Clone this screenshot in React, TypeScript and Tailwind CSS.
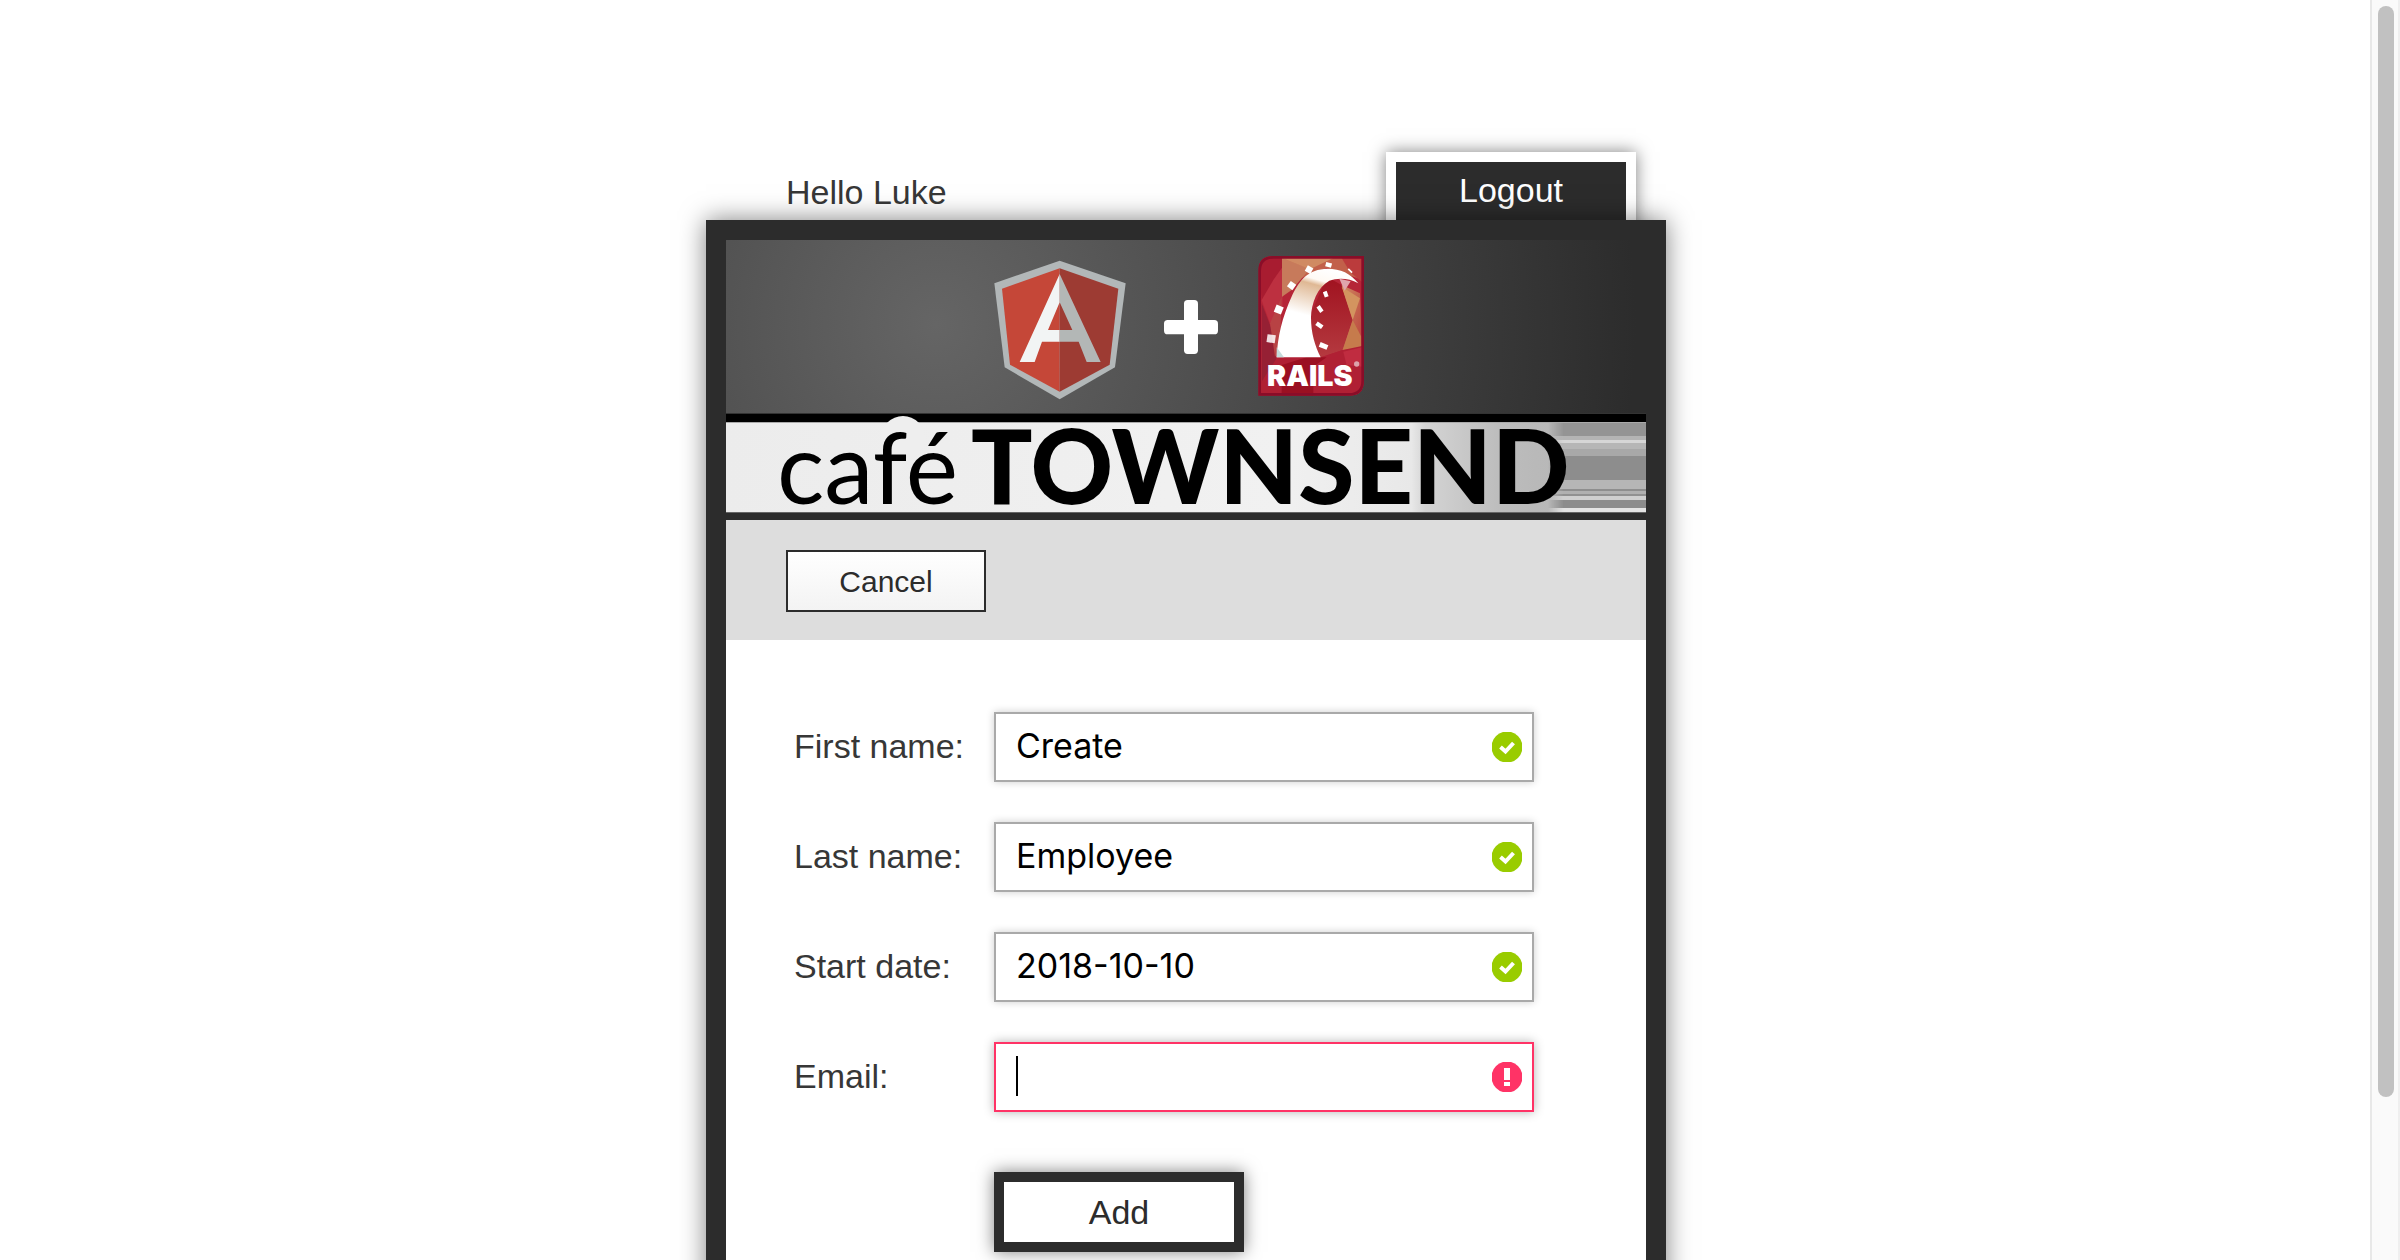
import React, { useState } from 'react';

function CafeLogo() {
  return (
    <svg
      viewBox="0 0 920 280"
      className="block w-full overflow-visible"
      role="img"
      aria-label="Angular plus Rails, café Townsend"
    >
      <defs>
        <linearGradient id="banner" x1="0" x2="1" y1="0" y2="0">
          <stop offset="0" stopColor="#ececec" />
          <stop offset="0.6" stopColor="#f1f1f1" />
          <stop offset="0.745" stopColor="#e8e8e8" />
          <stop offset="0.76" stopColor="#d4d4d4" />
          <stop offset="0.84" stopColor="#bdbdbd" />
          <stop offset="0.88" stopColor="#b9b9b9" />
          <stop offset="1" stopColor="#b4b4b4" />
        </linearGradient>
        <linearGradient id="fade" x1="0" x2="1" y1="0" y2="0">
          <stop offset="0" stopColor="#fff" stopOpacity="0" />
          <stop offset="0.16" stopColor="#fff" stopOpacity="1" />
        </linearGradient>
        <mask id="streaks">
          <rect x="822" y="180" width="98" height="94" fill="url(#fade)" />
        </mask>
        <linearGradient id="track" x1="0.6" y1="0" x2="0.35" y2="1">
          <stop offset="0" stopColor="#ffffff" />
          <stop offset="0.14" stopColor="#fffaf4" />
          <stop offset="0.2" stopColor="#dfb894" />
          <stop offset="0.55" stopColor="#ffffff" />
          <stop offset="1" stopColor="#ffffff" />
        </linearGradient>
        <linearGradient id="cave" x1="0" y1="0" x2="0" y2="1">
          <stop offset="0" stopColor="#a0121f" />
          <stop offset="1" stopColor="#b53a40" />
        </linearGradient>
        <linearGradient id="amber" x1="0" y1="0" x2="1" y2="1">
          <stop offset="0" stopColor="#d08a62" />
          <stop offset="1" stopColor="#b9413b" />
        </linearGradient>
        <clipPath id="card">
          <path d="M880 48H1152V422Q1152 467 1107 467H835V93Q835 48 880 48Z" />
        </clipPath>
      </defs>

      <g transform="translate(254 0) scale(0.33333)">
        {/* Angular shield */}
        <path d="M239 62L437 130L405 382L239 478L74 382L43 130Z" fill="#b2b7b8" />
        <path d="M239 85L66 146L90 374L239 455Z" fill="#c54738" />
        <path d="M239 85L415 146L389 374L239 455Z" fill="#9d3b33" />
        <path d="M239 102L119 366H164L186 305H239V270H204L239 187Z" fill="#f2f4f4" />
        <path d="M239 102L362 366H320L296 305H239V270H277L239 187Z" fill="#b3b7b6" />

        {/* Plus */}
        <rect x="552" y="240" width="162" height="43" rx="11" fill="#fff" />
        <rect x="612" y="180" width="42" height="162" rx="11" fill="#fff" />

        {/* Rails card */}
        <g clipPath="url(#card)">
          <rect x="835" y="48" width="317" height="419" fill="#b52537" />
          <path d="M835 48H908V160L845 180Z" fill="#a81c30" />
          <path d="M845 180L880 120L908 80V200L870 250Z" fill="#bd3040" />
          <path d="M845 190L880 280L890 360L845 440Z" fill="#962034" />
          <path d="M870 250L905 170L900 330L885 350Z" fill="#b84244" />
          <path d="M906 54H1150V120L1040 84L950 120L906 170Z" fill="#c2604a" />
          <path d="M906 54L990 86L935 150L906 170Z" fill="#c77a5b" />
          <path d="M906 54H1060L990 88Z" fill="#d08a62" />
          <path d="M1085 54H1150V130L1110 96Z" fill="#bb3b3c" />
          <path d="M1040 110L1085 135L1118 240L1088 330L1015 355L985 240Z" fill="url(#cave)" />
          <path d="M1085 135L1140 160L1146 320L1088 330L1118 240Z" fill="url(#amber)" />
          <path d="M1085 140L1140 175L1118 240Z" fill="#d3945f" />
          <path d="M1118 240L1144 290V325L1088 330Z" fill="#c67b4c" />
          <path d="M940 352H1022L1088 330L1146 318V467H835V440L890 355Z" fill="#b02034" />
          <path d="M905 375L980 352L1040 352L1000 380V467H905Z" fill="#9b1022" />
          <path d="M1090 335L1146 322V380L1100 375Z" fill="#c02c40" />
          <path d="M890 352C893 290 905 235 937 165C960 118 985 88 1042 86C1082 86 1112 100 1135 130C1105 112 1070 114 1048 122C1012 142 994 190 993 232C993 280 1005 318 1022 352Z" fill="url(#track)" />
          <path d="M1078 116L1112 124L1094 152Z" fill="#e0a5ac" />
          <path d="M890 322L912 352H890Z" fill="#c5dcdc" />
          <g fill="#fff">
            <rect x="978" y="79" width="19" height="19" transform="rotate(30 987 88)" />
            <rect x="1037" y="68" width="18" height="13" transform="rotate(15 1045 74)" />
            <rect x="925" y="126" width="20" height="20" transform="rotate(35 934 136)" />
            <rect x="885" y="197" width="23" height="23" transform="rotate(22 896 208)" />
            <rect x="861" y="284" width="25" height="24" transform="rotate(8 872 296)" opacity="0.85" />
            <rect x="1102" y="88" width="16" height="5" transform="rotate(45 1108 92)" />
            <rect x="1031" y="154" width="12" height="17" transform="rotate(-20 1037 162)" />
            <rect x="1014" y="197" width="12" height="20" transform="rotate(-35 1020 207)" />
            <rect x="1008" y="249" width="21" height="13" transform="rotate(35 1018 255)" />
            <rect x="1018" y="310" width="25" height="15" transform="rotate(22 1030 318)" />
          </g>
          <text
            x="861"
            y="437"
            fontSize="86"
            fontWeight="900"
            fill="#fff"
            fontFamily="Inter, 'Liberation Sans', sans-serif"
          >
            RAILS
          </text>
          <circle cx="1130" cy="372" r="8" fill="#dca3ab" />
        </g>
        <path d="M880 52H1148V422Q1148 463 1107 463H839V93Q839 52 880 52Z" fill="none" stroke="#8a0d28" strokeWidth="8" />
      </g>

      {/* Café Townsend banner */}
      <rect x="0" y="173" width="920" height="1" fill="#333" />
      <rect x="0" y="174" width="920" height="8" fill="#000" />
      <rect x="0" y="182" width="920" height="90" fill="url(#banner)" />
      <rect x="0" y="182" width="920" height="1" fill="#aaa" />
      <g mask="url(#streaks)">
        <rect x="812" y="183" width="108" height="13" fill="#949494" />
        <rect x="812" y="196" width="108" height="4" fill="#b4b4b4" />
        <rect x="812" y="200" width="108" height="3" fill="#d6d6d6" />
        <rect x="812" y="203" width="108" height="6" fill="#b6b6b6" />
        <rect x="812" y="209" width="108" height="7" fill="#a8a8a8" />
        <rect x="812" y="216" width="108" height="24" fill="#8d8d8d" />
        <rect x="812" y="240" width="108" height="9" fill="#b6b6b6" />
        <rect x="812" y="249" width="108" height="2" fill="#8e8e8e" />
        <rect x="812" y="251" width="108" height="3" fill="#b0b0b0" />
        <rect x="812" y="254" width="108" height="2" fill="#919191" />
        <rect x="812" y="256" width="108" height="4" fill="#cfcfcf" />
        <rect x="812" y="260" width="108" height="8" fill="#8c8c8c" />
        <rect x="812" y="268" width="108" height="4" fill="#e4e4e4" />
      </g>
      <circle cx="177" cy="198" r="22" fill="#eee" />
      <rect x="0" y="272" width="920" height="1" fill="#666" />
      <rect x="0" y="273" width="920" height="7" fill="#2c2c2c" />
      <text x="51" y="264" fontSize="99" fill="#000" fontFamily="Lato, sans-serif">
        café
      </text>
      <text x="245" y="264" fontSize="102" fontWeight="900" fill="#000" fontFamily="Lato, sans-serif">
        TOWNSEND
      </text>
    </svg>
  );
}

function ValidIcon() {
  return (
    <svg viewBox="0 0 30 30" className="size-[30px]" aria-hidden="true">
      <circle cx="15" cy="15" r="15.5" fill="#99cc00" />
      <path d="M8.5 15L13.5 19.5L21.5 11" fill="none" stroke="#fff" strokeWidth="4" />
    </svg>
  );
}

function InvalidIcon() {
  return (
    <svg viewBox="0 0 30 30" className="size-[30px]" aria-hidden="true">
      <circle cx="15" cy="15" r="15.5" fill="#ff3366" />
      <rect x="12" y="6" width="6" height="12" fill="#fff" />
      <rect x="12" y="20" width="6" height="4" fill="#fff" />
    </svg>
  );
}

type FieldProps = { id: string; label: string; initial: string; active?: boolean };

function Field({ id, label, initial, active }: FieldProps) {
  const [value, setValue] = useState(initial);
  const valid = value !== '';
  return (
    <>
      <label htmlFor={id} className="pb-[2px]">
        {label}
      </label>
      <div className="relative">
        <input
          id={id}
          type="text"
          value={value}
          onChange={(e) => setValue(e.target.value)}
          className={
            'block h-[70px] w-full border-2 bg-white pr-14 pb-1 pl-5 font-[Inter,sans-serif] text-[34px] text-black outline-none ' +
            (valid
              ? 'border-[#a9a9a9] shadow-[0_0_8px_rgba(0,0,0,0.2)]'
              : 'border-[#ff3366] shadow-[0_0_10px_rgba(0,0,0,0.3)]')
          }
        />
        {active && !valid && <span className="absolute top-[14px] left-[22px] h-10 w-[2px] bg-black" />}
        <span className="absolute top-5 right-3">{valid ? <ValidIcon /> : <InvalidIcon />}</span>
      </div>
    </>
  );
}

export default function App() {
  return (
    <div className="flex h-screen overflow-hidden bg-white font-['Liberation_Sans',Arial,sans-serif] text-[34px] text-[#373737]">
      <div className="min-w-0 flex-1 pl-[2px]">
        <div className="mx-auto max-w-[960px]">
          <header className="flex items-end justify-between pt-[152px] pr-[30px] pl-[80px]">
            <p className="pb-[8px] leading-[40px]">Hello Luke</p>
            <button
              type="button"
              className="-mb-4 h-[84px] w-[250px] border-10 border-b-0 border-white bg-[#2c2c2c] pb-[18px] leading-[56px] text-white shadow-[0_0_16px_rgba(0,0,0,0.5)]"
            >
              Logout
            </button>
          </header>

          <main className="relative border-20 border-[#2c2c2c] bg-white shadow-[0_0_24px_rgba(0,0,0,0.5)]">
            <div className="bg-[radial-gradient(circle_at_210px_84px,#656565,#2c2c2c_700px)]">
              <CafeLogo />
            </div>

            <nav className="relative bg-[#dddddd] px-[60px] pt-[30px] pb-[28px]">
              <button
                type="button"
                className="block h-[62px] w-[200px] border-2 border-[#2c2c2c] bg-linear-to-b from-white to-[#f3f3f3] text-[30px] text-[#2c2c2c]"
              >
                Cancel
              </button>
            </nav>

            <form
              className="grid grid-cols-[200px_1fr] items-center gap-y-[40px] pt-[72px] pr-[112px] pb-[120px] pl-[68px]"
              onSubmit={(e) => e.preventDefault()}
            >
              <Field id="first-name" label="First name:" initial="Create" />
              <Field id="last-name" label="Last name:" initial="Employee" />
              <Field id="start-date" label="Start date:" initial="2018-10-10" />
              <Field id="email" label="Email:" initial="" active />
              <button
                type="submit"
                className="col-start-2 mt-5 h-20 w-[250px] border-10 border-[#2c2c2c] bg-white leading-[60px] text-[#2c2c2c] shadow-[0_0_16px_rgba(0,0,0,0.5)]"
              >
                Add
              </button>
            </form>
          </main>
        </div>
      </div>

      <div className="w-[30px] shrink-0 border-x-2 border-l-[#e8e8e8] border-r-[#efefef] bg-[#fafafa] px-[6px] pt-[6px] pr-1">
        <div className="h-[87%] w-4 rounded-full bg-[#c1c1c1]" />
      </div>
    </div>
  );
}
